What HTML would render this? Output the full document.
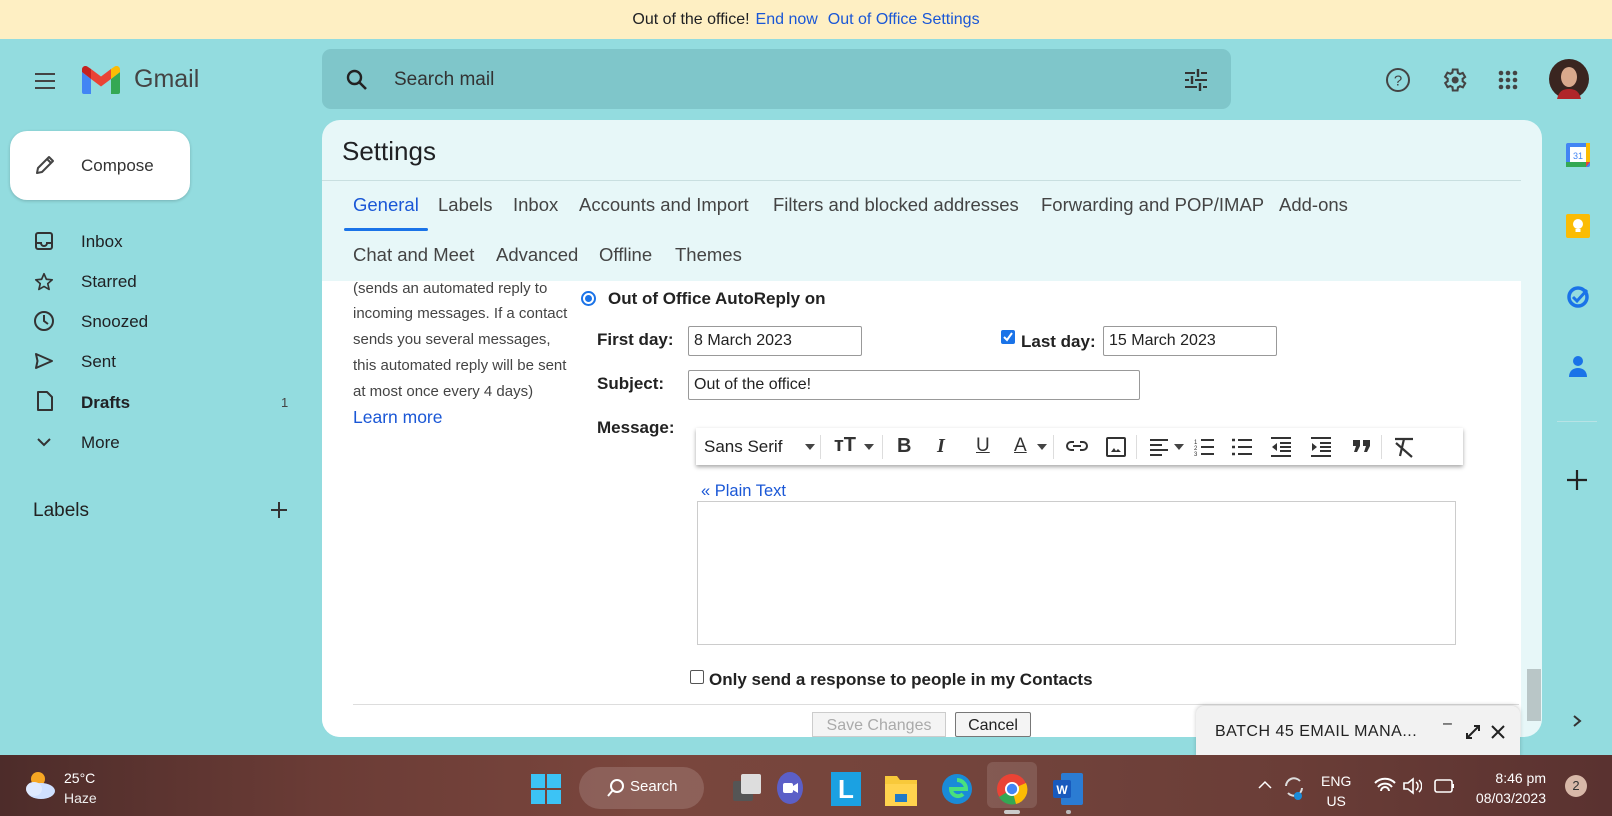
<!DOCTYPE html>
<html><head><meta charset="utf-8">
<style>
*{box-sizing:border-box;margin:0;padding:0}
body{width:1612px;height:816px;overflow:hidden;background:#93dcdf;font-family:"Liberation Sans",Arial,sans-serif;color:#202124;position:relative}
.a{position:absolute;white-space:nowrap}
.banner{left:0;top:0;width:1612px;height:39px;background:#feefc3;font-size:16px;text-align:center;line-height:39px;color:#202124}
.banner span{color:#1a57d6;margin-left:6px}
.nav{font-size:17px;color:#202124;left:81px}
.ic{position:absolute}
.panel{left:322px;top:120px;width:1220px;height:617px;background:#e7f7f8;border-radius:18px;overflow:hidden}
.tab{font-size:18.5px;color:#444}
.white{left:0;top:161px;width:1199px;height:456px;background:#fff}
.lt{font-size:15px;color:#444;left:31px}
.lbl{font-size:17px;font-weight:bold;color:#222}
.inp{border:1px solid #999;border-radius:2px;background:#fff;font-size:16px;padding-left:5px;line-height:27px;color:#222}
.tb{left:696px;top:428px;width:767px;height:37px;background:#fff;box-shadow:0 2px 4px rgba(0,0,0,.35);font-size:16px}
.taskbar{left:0;top:755px;width:1612px;height:61px;background:linear-gradient(90deg,#4d2c2a 0%,#6b3c36 20%,#7a463d 40%,#73443c 60%,#6a3d37 80%,#5a3230 100%)}
</style></head><body>
<div class="a banner">Out of the office!<span>End now</span><span style="margin-left:10px">Out of Office Settings</span></div>

<!-- header -->
<svg class="ic" style="left:33px;top:70px" width="24" height="22"><path d="M2 4h20M2 11h20M2 18h20" stroke="#444" stroke-width="2"/></svg>
<svg class="ic" style="left:82px;top:66px" width="38" height="29" viewBox="0 0 38 29"><path d="M0 6v20a2 2 0 0 0 2 2h7V13z" fill="#4285f4"/><path d="M29 13v15h7a2 2 0 0 0 2-2V6z" fill="#34a853"/><path d="M9 13L19 20.5 29 13V3L19 10.5 9 3z" fill="#ea4335"/><path d="M0 6l9 7V3L5.5.6C3.3-1 0 .5 0 3.5z" fill="#c5221f"/><path d="M29 3v10l9-7V3.5C38 .5 34.7-1 32.5.6z" fill="#fbbc04"/></svg>
<div class="a" style="left:134px;top:65px;font-size:25px;color:#444">Gmail</div>
<div class="a" style="left:322px;top:49px;width:909px;height:60px;background:#7fc6ca;border-radius:9px"></div>
<svg class="ic" style="left:345px;top:68px" width="24" height="24" viewBox="0 0 24 24"><circle cx="9.5" cy="9.5" r="6.5" fill="none" stroke="#222" stroke-width="2.4"/><path d="M14.5 14.5L21 21" stroke="#222" stroke-width="2.6"/></svg>
<div class="a" style="left:394px;top:69px;font-size:19px;color:#333">Search mail</div>
<svg class="ic" style="left:1183px;top:68px" width="26" height="24" viewBox="0 0 26 24"><path d="M2 5h10M18 5h6M2 12h4M12 12h12M2 19h12M20 19h4" stroke="#333" stroke-width="2"/><path d="M15 1v8M9 8v8M17 15v8" stroke="#333" stroke-width="2.4"/></svg>
<svg class="ic" style="left:1385px;top:67px" width="26" height="26"><circle cx="13" cy="13" r="11" fill="none" stroke="#444" stroke-width="2"/><text x="13" y="18.5" font-size="15" text-anchor="middle" fill="#444" font-family="Liberation Sans">?</text></svg>
<svg class="ic" style="left:1440px;top:66px" width="28" height="28" viewBox="0 0 24 24"><path d="M19.4 13a7.5 7.5 0 0 0 0-2l2.1-1.6-2-3.5-2.5 1a7 7 0 0 0-1.7-1L15 3h-4l-.4 2.7a7 7 0 0 0-1.7 1l-2.5-1-2 3.5L6.6 11a7.5 7.5 0 0 0 0 2l-2.1 1.6 2 3.5 2.5-1a7 7 0 0 0 1.7 1L11 21h4l.4-2.7a7 7 0 0 0 1.7-1l2.5 1 2-3.5z" fill="none" stroke="#444" stroke-width="1.8"/><circle cx="13" cy="12" r="3" fill="#444"/></svg>
<svg class="ic" style="left:1497px;top:69px" width="22" height="22"><g fill="#444"><circle cx="4" cy="4" r="2.3"/><circle cx="11" cy="4" r="2.3"/><circle cx="18" cy="4" r="2.3"/><circle cx="4" cy="11" r="2.3"/><circle cx="11" cy="11" r="2.3"/><circle cx="18" cy="11" r="2.3"/><circle cx="4" cy="18" r="2.3"/><circle cx="11" cy="18" r="2.3"/><circle cx="18" cy="18" r="2.3"/></g></svg>
<svg class="ic" style="left:1549px;top:59px" width="40" height="40"><circle cx="20" cy="20" r="20" fill="#3a2520"/><ellipse cx="20" cy="18" rx="8" ry="10" fill="#d9a98d"/><path d="M8 40c2-8 6-10 12-10s10 2 12 10z" fill="#b0262a"/></svg>

<!-- compose -->
<div class="a" style="left:10px;top:131px;width:180px;height:69px;background:#fff;border-radius:17px;box-shadow:0 1px 3px rgba(0,0,0,.2)"></div>
<svg class="ic" style="left:33px;top:153px" width="24" height="24" viewBox="0 0 24 24"><path d="M4 20l1-5L16 4l4 4L9 19z M14 6l4 4" fill="none" stroke="#444" stroke-width="2" stroke-linejoin="round"/></svg>
<div class="a" style="left:81px;top:156px;font-size:17px;color:#333">Compose</div>

<!-- nav -->
<svg class="ic" style="left:34px;top:231px" width="20" height="20"><rect x="2" y="2" width="16" height="16" rx="2" fill="none" stroke="#333" stroke-width="2"/><path d="M2 12h5a3 3 0 0 0 6 0h5" fill="none" stroke="#333" stroke-width="2"/></svg>
<div class="a nav" style="top:232px">Inbox</div>
<svg class="ic" style="left:33px;top:271px" width="22" height="22" viewBox="0 0 24 24"><path d="M12 3l2.6 6 6.4.6-4.9 4.2 1.5 6.3L12 16.8 6.4 20.1l1.5-6.3L3 9.6 9.4 9z" fill="none" stroke="#333" stroke-width="1.8" stroke-linejoin="round"/></svg>
<div class="a nav" style="top:272px">Starred</div>
<svg class="ic" style="left:33px;top:310px" width="22" height="22"><circle cx="11" cy="11" r="9" fill="none" stroke="#333" stroke-width="2"/><path d="M11 5v6l4 3" fill="none" stroke="#333" stroke-width="2"/></svg>
<div class="a nav" style="top:312px">Snoozed</div>
<svg class="ic" style="left:34px;top:352px" width="20" height="18"><path d="M2 2l16 7-16 7 1.5-7z" fill="none" stroke="#333" stroke-width="2" stroke-linejoin="round"/></svg>
<div class="a nav" style="top:352px">Sent</div>
<svg class="ic" style="left:36px;top:390px" width="18" height="22"><path d="M2 2h9l5 5v13H2z" fill="none" stroke="#333" stroke-width="2" stroke-linejoin="round"/></svg>
<div class="a nav" style="top:393px;font-weight:bold">Drafts</div>
<div class="a" style="left:281px;top:395px;font-size:13px;color:#444">1</div>
<svg class="ic" style="left:37px;top:437px" width="14" height="10"><path d="M1 2l6 6 6-6" fill="none" stroke="#333" stroke-width="2"/></svg>
<div class="a nav" style="top:433px">More</div>
<div class="a" style="left:33px;top:500px;font-size:19px;color:#222">Labels</div>
<svg class="ic" style="left:270px;top:501px" width="18" height="18"><path d="M9 1v16M1 9h16" stroke="#333" stroke-width="2"/></svg>

<!-- panel -->
<div class="a panel">
  <div class="a" style="left:20px;top:16px;font-size:26px;color:#202124">Settings</div>
  <div class="a" style="left:0;top:60px;width:1199px;height:1px;background:#c9dfe0"></div>
  <div class="a tab" style="left:31px;top:74px;color:#1a57d6">General</div>
  <div class="a" style="left:22px;top:108px;width:84px;height:3px;background:#1a73e8;border-radius:2px"></div>
  <div class="a tab" style="left:116px;top:74px">Labels</div>
  <div class="a tab" style="left:191px;top:74px">Inbox</div>
  <div class="a tab" style="left:257px;top:74px">Accounts and Import</div>
  <div class="a tab" style="left:451px;top:74px">Filters and blocked addresses</div>
  <div class="a tab" style="left:719px;top:74px">Forwarding and POP/IMAP</div>
  <div class="a tab" style="left:957px;top:74px">Add-ons</div>
  <div class="a tab" style="left:31px;top:124px">Chat and Meet</div>
  <div class="a tab" style="left:174px;top:124px">Advanced</div>
  <div class="a tab" style="left:277px;top:124px">Offline</div>
  <div class="a tab" style="left:353px;top:124px">Themes</div>
  <div class="a white"></div>
  <div class="a" style="left:1205px;top:549px;width:14px;height:52px;background:#b9c6c7"></div>
</div>

<div class="a lt" style="left:353px;top:280px">(sends an automated reply to</div>
<div class="a lt" style="left:353px;top:305px">incoming messages. If a contact</div>
<div class="a lt" style="left:353px;top:331px">sends you several messages,</div>
<div class="a lt" style="left:353px;top:357px">this automated reply will be sent</div>
<div class="a lt" style="left:353px;top:383px">at most once every 4 days)</div>
<div class="a" style="left:353px;top:407px;font-size:17.5px;color:#1a57d6">Learn more</div>

<div class="a" style="left:581px;top:291px;width:15px;height:15px;border-radius:50%;border:2px solid #1a73e8;background:#fff"></div>
<div class="a" style="left:585px;top:295px;width:7px;height:7px;border-radius:50%;background:#1a73e8"></div>
<div class="a lbl" style="left:608px;top:289px">Out of Office AutoReply on</div>

<div class="a lbl" style="left:597px;top:330px">First day:</div>
<div class="a inp" style="left:688px;top:326px;width:174px;height:30px">8 March 2023</div>
<div class="a" style="left:1001px;top:330px;width:14px;height:14px;background:#1a73e8;border-radius:2px"></div>
<svg class="ic" style="left:1002px;top:331px" width="12" height="12"><path d="M2 6l3 3 5-7" fill="none" stroke="#fff" stroke-width="2"/></svg>
<div class="a lbl" style="left:1021px;top:332px">Last day:</div>
<div class="a inp" style="left:1103px;top:326px;width:174px;height:30px">15 March 2023</div>

<div class="a lbl" style="left:597px;top:374px">Subject:</div>
<div class="a inp" style="left:688px;top:370px;width:452px;height:30px">Out of the office!</div>

<div class="a lbl" style="left:597px;top:418px">Message:</div>
<div class="a tb">
  <div class="a" style="left:8px;top:9px;font-size:17px;color:#222">Sans Serif</div>
  <svg class="ic" style="left:109px;top:16px" width="10" height="6"><path d="M0 0h10L5 6z" fill="#444"/></svg>
  <div class="a" style="left:124px;top:7px;width:1px;height:24px;background:#ddd"></div>
  <div class="a" style="left:138px;top:6px;font-size:20px;font-weight:bold;color:#333">тT</div>
  <svg class="ic" style="left:168px;top:16px" width="10" height="6"><path d="M0 0h10L5 6z" fill="#444"/></svg>
  <div class="a" style="left:186px;top:7px;width:1px;height:24px;background:#ddd"></div>
  <div class="a" style="left:201px;top:7px;font-size:20px;font-weight:bold;color:#333">B</div>
  <div class="a" style="left:241px;top:7px;font-size:20px;font-style:italic;font-weight:bold;color:#333;font-family:'Liberation Serif',serif">I</div>
  <div class="a" style="left:280px;top:7px;font-size:19px;text-decoration:underline;color:#333">U</div>
  <div class="a" style="left:318px;top:7px;font-size:19px;text-decoration:underline;color:#333">A</div>
  <svg class="ic" style="left:341px;top:16px" width="10" height="6"><path d="M0 0h10L5 6z" fill="#444"/></svg>
  <div class="a" style="left:357px;top:7px;width:1px;height:24px;background:#ddd"></div>
  <svg class="ic" style="left:369px;top:11px" width="24" height="14"><rect x="2" y="3" width="20" height="8" rx="4" fill="none" stroke="#333" stroke-width="2"/><rect x="9" y="2" width="6" height="10" fill="#fff"/><path d="M8 7h8" stroke="#333" stroke-width="2"/></svg>
  <svg class="ic" style="left:410px;top:9px" width="20" height="20"><rect x="1" y="1" width="18" height="18" rx="1" fill="none" stroke="#333" stroke-width="2"/><path d="M5 15l3-4 2 3 2-2 3 3z" fill="#333"/></svg>
  <div class="a" style="left:440px;top:7px;width:1px;height:24px;background:#ddd"></div>
  <svg class="ic" style="left:454px;top:10px" width="20" height="18"><path d="M0 2h18M0 7h12M0 12h18M0 17h12" stroke="#333" stroke-width="2"/></svg>
  <svg class="ic" style="left:478px;top:16px" width="10" height="6"><path d="M0 0h10L5 6z" fill="#444"/></svg>
  <svg class="ic" style="left:498px;top:10px" width="20" height="18"><path d="M7 2h13M7 9h13M7 16h13" stroke="#333" stroke-width="2"/><text x="0" y="6" font-size="6" fill="#333">1</text><text x="0" y="12" font-size="6" fill="#333">2</text><text x="0" y="18" font-size="6" fill="#333">3</text></svg>
  <svg class="ic" style="left:536px;top:10px" width="20" height="18"><path d="M6 2h14M6 9h14M6 16h14" stroke="#333" stroke-width="2"/><path d="M0 2h3M0 9h3M0 16h3" stroke="#333" stroke-width="2.4"/></svg>
  <svg class="ic" style="left:575px;top:9px" width="20" height="20"><path d="M0 1h20M9 6h11M9 10h11M9 14h11M0 19h20" stroke="#333" stroke-width="2"/><path d="M6 6v8l-5-4z" fill="#333"/></svg>
  <svg class="ic" style="left:615px;top:9px" width="20" height="20"><path d="M0 1h20M9 6h11M9 10h11M9 14h11M0 19h20" stroke="#333" stroke-width="2"/><path d="M1 6v8l5-4z" fill="#333"/></svg>
  <svg class="ic" style="left:656px;top:11px" width="20" height="14"><path d="M1 1h7v6l-3 6H2l2-6H1zM11 1h7v6l-3 6h-3l2-6h-3z" fill="#333"/></svg>
  <div class="a" style="left:685px;top:7px;width:1px;height:24px;background:#ddd"></div>
  <svg class="ic" style="left:697px;top:8px" width="22" height="22"><path d="M2 3h18M11 3l-4 17M3 7l16 14" stroke="#333" stroke-width="2.2"/></svg>
</div>
<div class="a" style="left:701px;top:482px;font-size:16.5px;color:#1a57d6">« Plain Text</div>
<div class="a" style="left:697px;top:501px;width:759px;height:144px;border:1px solid #ccc;background:#fff"></div>
<div class="a" style="left:690px;top:670px;width:14px;height:14px;border:1px solid #555;border-radius:2px;background:#fff"></div>
<div class="a lbl" style="left:709px;top:670px">Only send a response to people in my Contacts</div>
<div class="a" style="left:353px;top:704px;width:1166px;height:1px;background:#ddd"></div>
<div class="a" style="left:812px;top:712px;width:134px;height:25px;border:1px solid #ccc;background:#f4f4f4;font-size:16px;color:#aaa;text-align:center;line-height:25px">Save Changes</div>
<div class="a" style="left:955px;top:712px;width:76px;height:25px;border:1px solid #777;border-radius:2px;background:#f4f4f4;font-size:16px;color:#222;text-align:center;line-height:25px">Cancel</div>

<!-- chat box -->
<div class="a" style="left:1196px;top:706px;width:324px;height:52px;background:#f2f2f2;box-shadow:0 -1px 4px rgba(0,0,0,.2);border-radius:8px 8px 0 0"></div>
<div class="a" style="left:1215px;top:723px;font-size:16px;color:#222;letter-spacing:.5px">BATCH 45 EMAIL MANA...</div>
<div class="a" style="left:1443px;top:715px;font-size:16px;color:#222">–</div>
<svg class="ic" style="left:1465px;top:724px" width="16" height="16"><path d="M2 14L14 2M9 2h5v5M2 9v5h5" fill="none" stroke="#222" stroke-width="2"/></svg>
<svg class="ic" style="left:1491px;top:725px" width="14" height="14"><path d="M1 1l12 12M13 1L1 13" stroke="#222" stroke-width="2"/></svg>

<!-- right sidebar -->
<svg class="ic" style="left:1566px;top:143px" width="24" height="24"><rect x="0" y="0" width="24" height="24" rx="2" fill="#4285f4"/><rect x="4" y="4" width="16" height="15" fill="#fff"/><rect x="0" y="19" width="20" height="5" fill="#34a853"/><rect x="20" y="0" width="4" height="19" fill="#fbbc04"/><path d="M20 19h4l-4 5z" fill="#ea4335"/><text x="12" y="16" font-size="9" text-anchor="middle" fill="#4285f4" font-family="Liberation Sans">31</text></svg>
<svg class="ic" style="left:1566px;top:214px" width="24" height="24"><rect width="24" height="24" rx="2" fill="#fbbc04"/><circle cx="12" cy="10" r="5" fill="#fff"/><rect x="9.5" y="15" width="5" height="3" fill="#fff"/></svg>
<svg class="ic" style="left:1566px;top:284px" width="24" height="24"><circle cx="12" cy="13" r="9" fill="none" stroke="#1a73e8" stroke-width="3.5"/><path d="M7 13l4 4 10-11" fill="none" stroke="#1a73e8" stroke-width="3"/></svg>
<svg class="ic" style="left:1568px;top:355px" width="20" height="22"><circle cx="10" cy="6" r="5" fill="#1a73e8"/><path d="M1 22c0-6 4-9 9-9s9 3 9 9z" fill="#1a73e8"/></svg>
<div class="a" style="left:1557px;top:421px;width:40px;height:1px;background:#b7e3e5"></div>
<svg class="ic" style="left:1566px;top:469px" width="22" height="22"><path d="M11 1v20M1 11h20" stroke="#222" stroke-width="2.2"/></svg>
<svg class="ic" style="left:1572px;top:714px" width="10" height="14"><path d="M2 2l6 5-6 5" fill="none" stroke="#333" stroke-width="2"/></svg>

<!-- taskbar -->
<div class="a taskbar"></div>
<svg class="ic" style="left:22px;top:767px" width="36" height="36"><circle cx="16" cy="12" r="7" fill="#f6a623"/><ellipse cx="19" cy="24" rx="14" ry="8" fill="#cfe0ff"/><ellipse cx="12" cy="22" rx="8" ry="7" fill="#dfeaff"/></svg>
<div class="a" style="left:64px;top:770px;font-size:14px;color:#fff">25°C</div>
<div class="a" style="left:64px;top:790px;font-size:14px;color:#eee">Haze</div>
<svg class="ic" style="left:531px;top:774px" width="30" height="30"><g fill="#3cc3f5"><rect x="0" y="0" width="14" height="14"/><rect x="16" y="0" width="14" height="14"/><rect x="0" y="16" width="14" height="14"/><rect x="16" y="16" width="14" height="14"/></g></svg>
<div class="a" style="left:579px;top:767px;width:125px;height:42px;background:rgba(255,255,255,.15);border-radius:21px"></div>
<svg class="ic" style="left:607px;top:778px" width="18" height="20"><circle cx="10" cy="8" r="6" fill="none" stroke="#fff" stroke-width="2"/><path d="M6 12l-5 6" stroke="#fff" stroke-width="2"/></svg>
<div class="a" style="left:630px;top:778px;font-size:15px;color:#fff">Search</div>
<svg class="ic" style="left:733px;top:773px" width="30" height="30"><rect x="0" y="8" width="20" height="20" rx="2" fill="#555"/><rect x="8" y="1" width="20" height="20" rx="2" fill="#ddd"/></svg>
<svg class="ic" style="left:775px;top:771px" width="30" height="34"><ellipse cx="15" cy="17" rx="13" ry="16" fill="#5b5fc7"/><rect x="8" y="12" width="10" height="10" rx="2" fill="#fff"/><path d="M18 15l5-3v10l-5-3z" fill="#fff"/></svg>
<div class="a" style="left:831px;top:772px;width:30px;height:34px;background:#1ba1e2;color:#fff;font-size:26px;font-weight:bold;text-align:center;line-height:34px">L</div>
<svg class="ic" style="left:885px;top:772px" width="32" height="34"><path d="M0 4h12l3 4h17v26H0z" fill="#f8c93a"/><rect x="0" y="12" width="32" height="22" fill="#ffd34e"/><rect x="10" y="22" width="12" height="8" fill="#1f7ac8"/></svg>
<svg class="ic" style="left:941px;top:772px" width="32" height="34"><circle cx="16" cy="17" r="15" fill="#1a8bd8"/><path d="M16 8a9 9 0 0 1 9 9H10a7 7 0 0 0 12 5" fill="none" stroke="#49e07d" stroke-width="4"/></svg>
<div class="a" style="left:987px;top:762px;width:50px;height:46px;background:rgba(255,255,255,.12);border-radius:6px"></div>
<svg class="ic" style="left:996px;top:773px" width="32" height="32"><circle cx="16" cy="16" r="15" fill="#ea4335"/><path d="M16 16L3 24A15 15 0 0 0 20 31z" fill="#34a853"/><path d="M16 16l14-6a15 15 0 0 1-10 21z" fill="#fbbc04"/><circle cx="16" cy="16" r="7" fill="#fff"/><circle cx="16" cy="16" r="5.2" fill="#4285f4"/></svg>
<div class="a" style="left:1004px;top:810px;width:16px;height:4px;background:#ccc;border-radius:2px"></div>
<svg class="ic" style="left:1053px;top:773px" width="30" height="32"><rect x="8" y="0" width="22" height="32" rx="2" fill="#2b7cd3"/><rect x="0" y="7" width="18" height="18" rx="2" fill="#185abd"/><text x="9" y="21" font-size="12" font-weight="bold" text-anchor="middle" fill="#fff" font-family="Liberation Sans">W</text></svg>
<div class="a" style="left:1066px;top:810px;width:5px;height:4px;background:#bbb;border-radius:2px"></div>
<svg class="ic" style="left:1258px;top:780px" width="14" height="10"><path d="M1 8l6-6 6 6" fill="none" stroke="#fff" stroke-width="1.5"/></svg>
<svg class="ic" style="left:1282px;top:774px" width="24" height="28"><path d="M4 12a8 8 0 0 1 14-5M20 14a8 8 0 0 1-14 5" fill="none" stroke="#ddd" stroke-width="2"/><circle cx="16" cy="22" r="4" fill="#1a8bd8"/></svg>
<div class="a" style="left:1321px;top:771px;font-size:14px;color:#fff;text-align:center;line-height:20px">ENG<br>US</div>
<svg class="ic" style="left:1374px;top:777px" width="22" height="18"><path d="M1 6a14 14 0 0 1 20 0M4 10a9 9 0 0 1 14 0M7 14a4 4 0 0 1 8 0" fill="none" stroke="#fff" stroke-width="2"/></svg>
<svg class="ic" style="left:1402px;top:777px" width="20" height="18"><path d="M2 6h4l5-4v14l-5-4H2z" fill="none" stroke="#fff" stroke-width="1.6"/><path d="M14 5a5 5 0 0 1 0 8M17 3a8 8 0 0 1 0 12" fill="none" stroke="#fff" stroke-width="1.5"/></svg>
<svg class="ic" style="left:1434px;top:778px" width="22" height="16"><rect x="1" y="2" width="17" height="12" rx="2" fill="none" stroke="#fff" stroke-width="1.6"/><rect x="18" y="6" width="2" height="4" fill="#fff"/></svg>
<div class="a" style="left:1470px;top:768px;width:76px;font-size:14px;color:#fff;text-align:right;line-height:20px">8:46 pm<br>08/03/2023</div>
<div class="a" style="left:1565px;top:775px;width:22px;height:22px;border-radius:50%;background:#d8b8a8;color:#333;font-size:13px;text-align:center;line-height:22px">2</div>
</body></html>
